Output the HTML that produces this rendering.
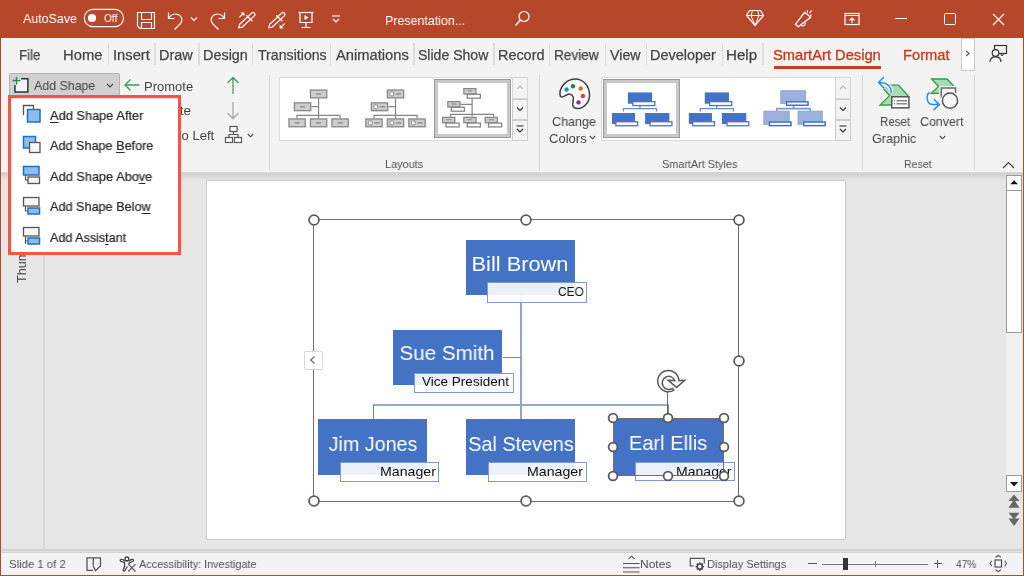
<!DOCTYPE html>
<html><head><meta charset="utf-8"><style>
html,body{margin:0;padding:0;width:1024px;height:576px;overflow:hidden;background:#f3f3f3;}
body{position:relative;font-family:"Liberation Sans", sans-serif;}
.t{position:absolute;white-space:pre;font-family:"Liberation Sans", sans-serif;will-change:transform;}
u{text-decoration:underline;text-underline-offset:1.5px;text-decoration-thickness:1px;}
svg{overflow:visible;}
</style></head><body>
<div style="position:absolute;left:0px;top:0px;width:1024px;height:38px;background:#B7472A"></div>
<div style="position:absolute;left:0px;top:175px;width:1024px;height:374px;background:#E6E6E6"></div>
<div style="position:absolute;left:0px;top:38px;width:1024px;height:133.7px;background:#F3F3F3"></div>
<div style="position:absolute;left:0px;top:171.7px;width:1024px;height:8px;background:linear-gradient(#dadada 0%,#d0d0d0 22%,#e6e6e6 100%)"></div>
<div style="position:absolute;left:0px;top:549px;width:1024px;height:1.5px;background:#d2d2d2"></div>
<div style="position:absolute;left:0px;top:550.5px;width:1024px;height:1px;background:#e0e0e0"></div>
<div style="position:absolute;left:0px;top:551.6px;width:1024px;height:1.2px;background:#d2d2d2"></div>
<div style="position:absolute;left:0px;top:552.8px;width:1024px;height:23px;background:#F3F3F3"></div>
<div style="position:absolute;left:0px;top:0px;width:1px;height:576px;background:#B7472A"></div>
<div style="position:absolute;left:1023px;top:0px;width:1px;height:576px;background:#B7472A"></div>
<div style="position:absolute;left:0px;top:575px;width:1024px;height:1px;background:#B7472A"></div>
<div class="t" style="left:23.40px;top:11.90px;font-size:13px;line-height:13px;color:#ffffff;transform:scaleX(0.9536);transform-origin:0 0;">AutoSave</div>
<svg style="position:absolute;left:82px;top:7px;" width="44" height="22" viewBox="0 0 44 22"><rect x="2.3" y="2.4" width="39.2" height="17.2" rx="8.6" fill="none" stroke="#fff" stroke-width="1.1"/><circle cx="10" cy="11" r="4.1" fill="#fff"/></svg>
<div class="t" style="left:103.75px;top:13.19px;font-size:11px;line-height:11px;color:#ffffff;transform:scaleX(0.9167);transform-origin:0 0;">Off</div>
<svg style="position:absolute;left:136px;top:11px;" width="20" height="19" viewBox="0 0 20 19"><path d="M1.5 1.5H18.5V17.5H4L1.5 15Z" fill="none" stroke="#fff" stroke-width="1.15"/><path d="M5.5 1.5V8.5H15.5V1.5" fill="none" stroke="#fff" stroke-width="1.15"/><path d="M5.5 17.5V11.5H15.5V17.5" fill="none" stroke="#fff" stroke-width="1.15"/></svg>
<svg style="position:absolute;left:166px;top:11px;" width="20" height="19" viewBox="0 0 20 19"><path d="M2.5 1.5V7.5H8.5" fill="none" stroke="#fff" stroke-width="1.2"/><path d="M2.8 7.3C5 3.5 9 2.5 12 3.5C16 5 17 9.5 14.5 12.5L8.5 18.5" fill="none" stroke="#fff" stroke-width="1.2"/></svg>
<svg style="position:absolute;left:190px;top:16px;" width="8" height="6" viewBox="0 0 8 6"><path d="M1 1.5L4 4.5L7 1.5" fill="none" stroke="#fff" stroke-width="1.1"/></svg>
<svg style="position:absolute;left:207px;top:11px;" width="20" height="19" viewBox="0 0 20 19"><path d="M17.5 1.5V7.5H11.5" fill="none" stroke="#fff" stroke-width="1.2"/><path d="M17.2 7.3C15 3.5 11 2.5 8 3.5C4 5 3 9.5 5.5 12.5L11.5 18.5" fill="none" stroke="#fff" stroke-width="1.2"/></svg>
<svg style="position:absolute;left:237px;top:11px;" width="20" height="20" viewBox="0 0 20 20"><path d="M1.7 16.9L2.7 13.2L14.7 2.1A1.9 1.9 0 0 1 17.3 4.9L5.3 16Z" fill="none" stroke="#fff" stroke-width="1.2" stroke-linejoin="round"/><path d="M9.3 4.3L15.4 10.2" stroke="#fff" stroke-width="1.2"/><path d="M2.4 6.3L6.5 2.2" stroke="#fff" stroke-width="1.2"/><path d="M3.5 1.4H7.4V5.3Z" fill="#fff"/></svg>
<svg style="position:absolute;left:267px;top:11px;" width="20" height="20" viewBox="0 0 20 20"><path d="M1.7 16.9L2.7 13.2L14.7 2.1A1.9 1.9 0 0 1 17.3 4.9L5.3 16Z" fill="none" stroke="#fff" stroke-width="1.2" stroke-linejoin="round"/><path d="M9.3 4.3L15.4 10.2" stroke="#fff" stroke-width="1.2"/><path d="M17.6 12.6L13.5 16.7" stroke="#fff" stroke-width="1.2"/><path d="M12.6 13.6V17.5H16.5Z" fill="#fff"/></svg>
<svg style="position:absolute;left:297px;top:11px;" width="18" height="18" viewBox="0 0 18 18"><path d="M1.5 1.5H16.5" stroke="#fff" stroke-width="1.2"/><path d="M3 1.5V11.5H15V1.5" fill="none" stroke="#fff" stroke-width="1.2"/><path d="M7.5 4L11.5 6.5L7.5 9Z" fill="#fff"/><path d="M9 11.5V16.5M4.5 16.5H13.5" stroke="#fff" stroke-width="1.2"/></svg>
<svg style="position:absolute;left:331px;top:15px;" width="10" height="9" viewBox="0 0 10 9"><path d="M1 1H9" stroke="#fff" stroke-width="1.1"/><path d="M2 4L5 7L8 4" fill="none" stroke="#fff" stroke-width="1.1"/></svg>
<div class="t" style="left:384.58px;top:13.57px;font-size:13.5px;line-height:13.5px;color:#ffffff;transform:scaleX(0.9206);transform-origin:0 0;">Presentation...</div>
<svg style="position:absolute;left:514px;top:10px;" width="17" height="17" viewBox="0 0 17 17"><circle cx="10" cy="6.5" r="5" fill="none" stroke="#fff" stroke-width="1.2"/><path d="M6.5 10L1.5 15.5" stroke="#fff" stroke-width="1.3"/></svg>
<svg style="position:absolute;left:745px;top:9px;" width="20" height="18" viewBox="0 0 20 18"><path d="M4.5 1.5H15.5L18.5 6.5L10 16.5L1.5 6.5Z" fill="none" stroke="#fff" stroke-width="1.2"/><path d="M1.5 6.5H18.5M7.5 1.5L6 6.5L10 16.5L14 6.5L12.5 1.5" fill="none" stroke="#fff" stroke-width="1"/></svg>
<svg style="position:absolute;left:794px;top:9px;" width="20" height="19" viewBox="0 0 20 19"><path d="M1.3 15.3L10.7 3.25L16.75 8.25L4.25 17.8Z" fill="none" stroke="#fff" stroke-width="1.25" stroke-linejoin="round"/><path d="M7 15.6C7.5 17.8 11 17.6 11.6 13.5" fill="none" stroke="#fff" stroke-width="1.2"/><path d="M13.2 1.2L13.6 3.6M17.8 1.4L15.5 3.8M17.6 6.1L16 6.1" stroke="#fff" stroke-width="1.1"/></svg>
<svg style="position:absolute;left:844px;top:12px;" width="16" height="14" viewBox="0 0 16 14"><rect x="1" y="1.5" width="14" height="11" fill="none" stroke="#fff" stroke-width="1.2"/><path d="M1 3.5H15" stroke="#fff" stroke-width="1"/><path d="M8 11V6M5.5 8.5L8 6L10.5 8.5" fill="none" stroke="#fff" stroke-width="1.1"/></svg>
<div style="position:absolute;left:895px;top:18px;width:12px;height:1px;background:#fff"></div>
<div style="position:absolute;left:944px;top:13px;width:12px;height:12px;border:1px solid #fff;box-sizing:border-box;border-radius:1.5px"></div>
<svg style="position:absolute;left:992px;top:13px;" width="13" height="13" viewBox="0 0 13 13"><path d="M1 1L12 12M12 1L1 12" stroke="#fff" stroke-width="1.2"/></svg>
<div class="t" style="left:18.55px;top:48.40px;font-size:14px;line-height:14px;color:#444444;-webkit-text-stroke:0.25px #444444;transform:scaleX(0.9524);transform-origin:0 0;">File</div>
<div class="t" style="left:63.44px;top:48.40px;font-size:14px;line-height:14px;color:#444444;-webkit-text-stroke:0.25px #444444;transform:scaleX(1.0556);transform-origin:0 0;">Home</div>
<div class="t" style="left:112.70px;top:48.40px;font-size:14px;line-height:14px;color:#444444;-webkit-text-stroke:0.25px #444444;transform:scaleX(1.0515);transform-origin:0 0;">Insert</div>
<div class="t" style="left:158.97px;top:48.40px;font-size:14px;line-height:14px;color:#444444;-webkit-text-stroke:0.25px #444444;transform:scaleX(1.0312);transform-origin:0 0;">Draw</div>
<div class="t" style="left:202.72px;top:48.40px;font-size:14px;line-height:14px;color:#444444;-webkit-text-stroke:0.25px #444444;transform:scaleX(1.0298);transform-origin:0 0;">Design</div>
<div class="t" style="left:257.50px;top:48.40px;font-size:14px;line-height:14px;color:#444444;-webkit-text-stroke:0.25px #444444;transform:scaleX(1.011);transform-origin:0 0;">Transitions</div>
<div class="t" style="left:336.25px;top:48.40px;font-size:14px;line-height:14px;color:#444444;-webkit-text-stroke:0.25px #444444;transform:scaleX(1.0507);transform-origin:0 0;">Animations</div>
<div class="t" style="left:417.75px;top:48.40px;font-size:14px;line-height:14px;color:#444444;-webkit-text-stroke:0.25px #444444;transform:scaleX(1.0036);transform-origin:0 0;">Slide Show</div>
<div class="t" style="left:497.72px;top:48.40px;font-size:14px;line-height:14px;color:#444444;-webkit-text-stroke:0.25px #444444;transform:scaleX(1.0291);transform-origin:0 0;">Record</div>
<div class="t" style="left:554.03px;top:48.40px;font-size:14px;line-height:14px;color:#444444;-webkit-text-stroke:0.25px #444444;transform:scaleX(0.9722);transform-origin:0 0;">Review</div>
<div class="t" style="left:610.00px;top:48.40px;font-size:14px;line-height:14px;color:#444444;-webkit-text-stroke:0.25px #444444;transform:scaleX(1.0167);transform-origin:0 0;">View</div>
<div class="t" style="left:650.22px;top:48.40px;font-size:14px;line-height:14px;color:#444444;-webkit-text-stroke:0.25px #444444;transform:scaleX(1.0317);transform-origin:0 0;">Developer</div>
<div class="t" style="left:726.32px;top:48.40px;font-size:14px;line-height:14px;color:#444444;-webkit-text-stroke:0.25px #444444;transform:scaleX(1.0778);transform-origin:0 0;">Help</div>
<div style="position:absolute;left:107.75px;top:43px;width:1.5px;height:21.5px;background:#dcdcdc"></div>
<div style="position:absolute;left:154.25px;top:43px;width:1.5px;height:21.5px;background:#dcdcdc"></div>
<div style="position:absolute;left:198.0px;top:43px;width:1.5px;height:21.5px;background:#dcdcdc"></div>
<div style="position:absolute;left:251.75px;top:43px;width:1.5px;height:21.5px;background:#dcdcdc"></div>
<div style="position:absolute;left:329.75px;top:43px;width:1.5px;height:21.5px;background:#dcdcdc"></div>
<div style="position:absolute;left:413.0px;top:43px;width:1.5px;height:21.5px;background:#dcdcdc"></div>
<div style="position:absolute;left:493.0px;top:43px;width:1.5px;height:21.5px;background:#dcdcdc"></div>
<div style="position:absolute;left:548.5px;top:43px;width:1.5px;height:21.5px;background:#dcdcdc"></div>
<div style="position:absolute;left:604.75px;top:43px;width:1.5px;height:21.5px;background:#dcdcdc"></div>
<div style="position:absolute;left:645.5px;top:43px;width:1.5px;height:21.5px;background:#dcdcdc"></div>
<div style="position:absolute;left:721.75px;top:43px;width:1.5px;height:21.5px;background:#dcdcdc"></div>
<div style="position:absolute;left:762.25px;top:43px;width:1.5px;height:21.5px;background:#dcdcdc"></div>
<div class="t" style="left:773.25px;top:48.40px;font-size:14px;line-height:14px;color:#C43E1C;-webkit-text-stroke:0.35px #C43E1C;transform:scaleX(1.0495);transform-origin:0 0;">SmartArt Design</div>
<div style="position:absolute;left:774px;top:66px;width:107px;height:3px;background:#C43E1C"></div>
<div class="t" style="left:902.95px;top:48.40px;font-size:14px;line-height:14px;color:#C43E1C;-webkit-text-stroke:0.3px #C43E1C;transform:scaleX(1.0512);transform-origin:0 0;">Format</div>
<div style="position:absolute;left:961px;top:38px;width:14px;height:33px;background:#fff;border:1px solid #c9c9c9;box-sizing:border-box"></div>
<svg style="position:absolute;left:965px;top:50px;" width="6" height="7" viewBox="0 0 6 7"><path d="M1.2 1L4.2 3.5L1.2 6" fill="none" stroke="#555" stroke-width="1.1"/></svg>
<svg style="position:absolute;left:988px;top:44px;" width="20" height="20" viewBox="0 0 20 20"><rect x="6.5" y="1.5" width="12" height="8" fill="none" stroke="#333" stroke-width="1.2"/><circle cx="7.5" cy="9" r="3.3" fill="#f3f3f3" stroke="#333" stroke-width="1.2"/><path d="M2 18C2 14.5 4.5 12.8 7.5 12.8C10.5 12.8 13 14.5 13 18" fill="none" stroke="#333" stroke-width="1.2"/><path d="M12.5 9.5L14 12L16 9.5" fill="none" stroke="#333" stroke-width="1"/></svg>
<!--RIBBON-->
<div style="position:absolute;left:9px;top:73px;width:111px;height:23px;background:#d0d0d0;border:1px solid #b3b3b3;box-sizing:border-box;border-radius:2px"></div>
<svg style="position:absolute;left:12px;top:76px;" width="18" height="18" viewBox="0 0 18 18"><rect x="3" y="3" width="12.8" height="13" fill="#f0f4f9"/><path d="M9 2.75H15.85V15.95H2.95V9" fill="none" stroke="#333" stroke-width="1.5"/><path d="M4.5 1V8.6M0.7 4.6H8.5" stroke="#1f8b3b" stroke-width="1.5"/></svg>
<div class="t" style="left:34.00px;top:79.25px;font-size:13px;line-height:13px;color:#444444;transform:scaleX(0.9531);transform-origin:0 0;">Add Shape</div>
<svg style="position:absolute;left:106px;top:83px;" width="8" height="5" viewBox="0 0 8 5"><path d="M1 1L4 4L7 1" fill="none" stroke="#444" stroke-width="1.1"/></svg>
<svg style="position:absolute;left:123px;top:78px;" width="18" height="14" viewBox="0 0 18 14"><path d="M16.5 7H2M7.5 1.5L2 7L7.5 12.5" fill="none" stroke="#3aa05a" stroke-width="1.3"/></svg>
<div class="t" style="left:143.71px;top:79.60px;font-size:13px;line-height:13px;color:#444444;transform:scaleX(0.9938);transform-origin:0 0;">Promote</div>
<div class="t" style="left:143.67px;top:104.00px;font-size:13px;line-height:13px;color:#444444;transform:scaleX(1.0341);transform-origin:0 0;">Demote</div>
<div class="t" style="left:143.70px;top:128.60px;font-size:13px;line-height:13px;color:#444444;transform:scaleX(1.0007);transform-origin:0 0;">Right to Left</div>
<svg style="position:absolute;left:226px;top:76px;" width="14" height="19" viewBox="0 0 14 19"><path d="M7 18V1.5M1.5 7L7 1.5L12.5 7" fill="none" stroke="#3aa05a" stroke-width="1.3"/></svg>
<svg style="position:absolute;left:226px;top:101px;" width="14" height="19" viewBox="0 0 14 19"><path d="M7 1V17.5M1.5 12L7 17.5L12.5 12" fill="none" stroke="#a8a8a8" stroke-width="1.3"/></svg>
<svg style="position:absolute;left:224px;top:125px;" width="19" height="19" viewBox="0 0 19 19"><rect x="6" y="1.5" width="7" height="5" fill="#fff" stroke="#555" stroke-width="1.2"/><path d="M9.5 6.5V9.5M5 12.5V9.5H14V12.5" fill="none" stroke="#555" stroke-width="1.2"/><rect x="1.5" y="12.5" width="7" height="5" fill="#fff" stroke="#555" stroke-width="1.2"/><rect x="10.5" y="12.5" width="7" height="5" fill="#fff" stroke="#555" stroke-width="1.2"/></svg>
<svg style="position:absolute;left:247px;top:133px;" width="7" height="5" viewBox="0 0 7 5"><path d="M0.8 1L3.5 3.8L6.2 1" fill="none" stroke="#444" stroke-width="1.1"/></svg>
<div style="position:absolute;left:269px;top:75px;width:1px;height:95px;background:#d4d4d4"></div>
<div style="position:absolute;left:279px;top:77px;width:234px;height:64px;background:#fff;border:1px solid #dadada;box-sizing:border-box"></div>
<div style="position:absolute;left:434px;top:79px;width:77px;height:59px;background:#fff;border:1px solid #9a9a9a;box-sizing:border-box"></div>
<div style="position:absolute;left:435px;top:80px;width:75px;height:57px;border:3.5px solid #c8c8c8;box-sizing:border-box"></div>
<svg style="position:absolute;left:279px;top:77px;" width="234" height="64" viewBox="0 0 234 64"><path d="M39.60 21.40V41.50M32.50 29.60H39.60M18.00 41.50V38.40H61.10V41.50" fill="none" stroke="#858585" stroke-width="1.2"/><rect x="31.43" y="13.03" width="16.35" height="7.85" fill="#cdcdcd" stroke="#858585" stroke-width="1.25"/><path d="M37.10 16.95H42.10" fill="none" stroke="#858585" stroke-width="1.3"/><rect x="15.43" y="25.83" width="16.35" height="7.85" fill="#cdcdcd" stroke="#858585" stroke-width="1.25"/><path d="M21.10 29.75H26.10" fill="none" stroke="#858585" stroke-width="1.3"/><rect x="9.93" y="41.92" width="16.35" height="7.85" fill="#cdcdcd" stroke="#858585" stroke-width="1.25"/><path d="M15.60 45.85H20.60" fill="none" stroke="#858585" stroke-width="1.3"/><rect x="31.43" y="41.92" width="16.35" height="7.85" fill="#cdcdcd" stroke="#858585" stroke-width="1.25"/><path d="M37.10 45.85H42.10" fill="none" stroke="#858585" stroke-width="1.3"/><rect x="52.93" y="41.92" width="16.35" height="7.85" fill="#cdcdcd" stroke="#858585" stroke-width="1.25"/><path d="M58.60 45.85H63.60" fill="none" stroke="#858585" stroke-width="1.3"/><path d="M116.50 21.40V41.50M109.40 29.60H116.50M94.90 41.50V38.40H138.00V41.50" fill="none" stroke="#858585" stroke-width="1.2"/><rect x="108.33" y="13.03" width="16.35" height="7.85" fill="#cdcdcd" stroke="#858585" stroke-width="1.25"/><rect x="110.80" y="15.00" width="3.9" height="3.9" rx="1" fill="#fff" stroke="#858585" stroke-width="1"/><path d="M116.90 16.95H122.20" fill="none" stroke="#858585" stroke-width="1.3"/><rect x="92.33" y="25.83" width="16.35" height="7.85" fill="#cdcdcd" stroke="#858585" stroke-width="1.25"/><rect x="94.80" y="27.80" width="3.9" height="3.9" rx="1" fill="#fff" stroke="#858585" stroke-width="1"/><path d="M100.90 29.75H106.20" fill="none" stroke="#858585" stroke-width="1.3"/><rect x="86.83" y="41.92" width="16.35" height="7.85" fill="#cdcdcd" stroke="#858585" stroke-width="1.25"/><rect x="89.30" y="43.90" width="3.9" height="3.9" rx="1" fill="#fff" stroke="#858585" stroke-width="1"/><path d="M95.40 45.85H100.70" fill="none" stroke="#858585" stroke-width="1.3"/><rect x="108.33" y="41.92" width="16.35" height="7.85" fill="#cdcdcd" stroke="#858585" stroke-width="1.25"/><rect x="110.80" y="43.90" width="3.9" height="3.9" rx="1" fill="#fff" stroke="#858585" stroke-width="1"/><path d="M116.90 45.85H122.20" fill="none" stroke="#858585" stroke-width="1.3"/><rect x="129.83" y="41.92" width="16.35" height="7.85" fill="#cdcdcd" stroke="#858585" stroke-width="1.25"/><rect x="132.30" y="43.90" width="3.9" height="3.9" rx="1" fill="#fff" stroke="#858585" stroke-width="1"/><path d="M138.40 45.85H143.70" fill="none" stroke="#858585" stroke-width="1.3"/><path d="M193.10 21.00V39.70M181.60 27.40H193.10M171.60 39.70V37.30H214.60V39.70" fill="none" stroke="#858585" stroke-width="1.2"/><rect x="184.82" y="11.62" width="12.15" height="5.35" fill="#cdcdcd" stroke="#858585" stroke-width="1.25"/><path d="M188.40 14.00H193.40" fill="none" stroke="#858585" stroke-width="1"/><rect x="188.22" y="17.33" width="13.15" height="3.85" fill="#fff" stroke="#858585" stroke-width="1.25"/><rect x="168.82" y="24.62" width="12.15" height="5.35" fill="#cdcdcd" stroke="#858585" stroke-width="1.25"/><path d="M172.40 27.00H177.40" fill="none" stroke="#858585" stroke-width="1"/><rect x="172.22" y="30.33" width="13.15" height="3.85" fill="#fff" stroke="#858585" stroke-width="1.25"/><rect x="163.62" y="40.38" width="12.15" height="5.35" fill="#cdcdcd" stroke="#858585" stroke-width="1.25"/><path d="M167.20 42.75H172.20" fill="none" stroke="#858585" stroke-width="1"/><rect x="167.02" y="46.08" width="13.15" height="3.85" fill="#fff" stroke="#858585" stroke-width="1.25"/><rect x="184.82" y="40.38" width="12.15" height="5.35" fill="#cdcdcd" stroke="#858585" stroke-width="1.25"/><path d="M188.40 42.75H193.40" fill="none" stroke="#858585" stroke-width="1"/><rect x="188.22" y="46.08" width="13.15" height="3.85" fill="#fff" stroke="#858585" stroke-width="1.25"/><rect x="206.12" y="40.38" width="12.15" height="5.35" fill="#cdcdcd" stroke="#858585" stroke-width="1.25"/><path d="M209.70 42.75H214.70" fill="none" stroke="#858585" stroke-width="1"/><rect x="209.52" y="46.08" width="13.15" height="3.85" fill="#fff" stroke="#858585" stroke-width="1.25"/></svg>
<div style="position:absolute;left:512px;top:77px;width:16px;height:22px;background:#f3f3f3;border:1px solid #d6d6d6;box-sizing:border-box"></div>
<div style="position:absolute;left:512px;top:98.5px;width:16px;height:21px;background:#f3f3f3;border:1px solid #cdcdcd;box-sizing:border-box"></div>
<div style="position:absolute;left:512px;top:119.5px;width:16px;height:21.5px;background:#f3f3f3;border:1px solid #cdcdcd;box-sizing:border-box"></div>
<svg style="position:absolute;left:516px;top:85px;" width="8" height="5" viewBox="0 0 8 5"><path d="M1 4L4 1L7 4" fill="none" stroke="#b5b5b5" stroke-width="1.1"/></svg>
<svg style="position:absolute;left:516px;top:106px;" width="8" height="6" viewBox="0 0 8 6"><path d="M1 1.5L4 4.5L7 1.5" fill="none" stroke="#333" stroke-width="1.2"/></svg>
<svg style="position:absolute;left:516px;top:125px;" width="8" height="9" viewBox="0 0 8 9"><path d="M0.5 1H7.5" stroke="#333" stroke-width="1.1"/><path d="M1 4L4 7L7 4" fill="none" stroke="#333" stroke-width="1.2"/></svg>
<div class="t" style="left:385.05px;top:158.67px;font-size:11.5px;line-height:11.5px;color:#505050;transform:scaleX(0.9487);transform-origin:0 0;">Layouts</div>
<div style="position:absolute;left:539px;top:75px;width:1px;height:95px;background:#d4d4d4"></div>
<svg style="position:absolute;left:557px;top:77px;" width="34" height="34" viewBox="0 0 34 34"><path d="M3.5 19.5C1 13 8 2 18 2C26 2 32.5 8.5 32.5 18C32.5 26 26.5 31.5 20.5 31.5C16.5 31.5 15 29 16 25C17 21.5 16.5 17.5 12.5 17C9 16.8 6 22 3.5 19.5Z" fill="#fff" stroke="#404040" stroke-width="1.5"/><circle cx="9.6" cy="12.5" r="2.2" fill="#1e88d8"/><circle cx="16" cy="9.3" r="2.2" fill="#1d8a3c"/><circle cx="23.7" cy="11.5" r="2.2" fill="#e8700a"/><circle cx="25.9" cy="19" r="2.2" fill="#e83a3a"/><circle cx="21.5" cy="25.4" r="2.2" fill="#8a2bae"/></svg>
<div class="t" style="left:551.93px;top:115.40px;font-size:13px;line-height:13px;color:#444444;transform:scaleX(0.9659);transform-origin:0 0;">Change</div>
<div class="t" style="left:549.30px;top:132.00px;font-size:13px;line-height:13px;color:#444444;transform:scaleX(1.0028);transform-origin:0 0;">Colors</div>
<svg style="position:absolute;left:589px;top:135px;" width="7" height="5" viewBox="0 0 7 5"><path d="M0.8 1L3.5 3.8L6.2 1" fill="none" stroke="#444" stroke-width="1.1"/></svg>
<div style="position:absolute;left:601px;top:77px;width:235px;height:64px;background:#fff;border:1px solid #dadada;box-sizing:border-box"></div>
<div style="position:absolute;left:603px;top:79px;width:77px;height:59px;background:#fff;border:1px solid #9a9a9a;box-sizing:border-box"></div>
<div style="position:absolute;left:604px;top:80px;width:75px;height:57px;border:3.5px solid #c8c8c8;box-sizing:border-box"></div>
<svg style="position:absolute;left:601px;top:77px;" width="235" height="64" viewBox="0 0 235 64"><path d="M39.00 29.00V31.70M22.40 34.40V31.70H55.50V34.40" fill="none" stroke="#6b8cc8" stroke-width="1.3"/><rect x="26.90" y="15.40" width="24.20" height="11.30" fill="#4472c4"/><rect x="31.85" y="24.65" width="22.00" height="3.90" fill="#fff" stroke="#4a75c4" stroke-width="1.3"/><rect x="11.00" y="36.00" width="23.10" height="11.10" fill="#4472c4"/><rect x="14.85" y="44.75" width="21.80" height="4.00" fill="#fff" stroke="#4a75c4" stroke-width="1.3"/><rect x="44.10" y="36.00" width="24.30" height="11.10" fill="#4472c4"/><rect x="49.15" y="44.75" width="21.80" height="4.00" fill="#fff" stroke="#4a75c4" stroke-width="1.3"/><path d="M115.85 29.00V31.70M99.25 34.40V31.70H132.35V34.40" fill="none" stroke="#6b8cc8" stroke-width="1.3"/><rect x="103.75" y="15.40" width="24.20" height="11.30" fill="#4472c4"/><rect x="108.70" y="24.65" width="22.00" height="3.90" fill="#fff" stroke="#4a75c4" stroke-width="1.3"/><rect x="87.85" y="36.00" width="23.10" height="11.10" fill="#4472c4"/><rect x="91.70" y="44.75" width="21.80" height="4.00" fill="#fff" stroke="#4a75c4" stroke-width="1.3"/><rect x="120.95" y="36.00" width="24.30" height="11.10" fill="#4472c4"/><rect x="126.00" y="44.75" width="21.80" height="4.00" fill="#fff" stroke="#4a75c4" stroke-width="1.3"/><path d="M192.50 28.80V31.60M175.80 34.00V31.60H209.10V34.00" fill="none" stroke="#7d98cc" stroke-width="1.6"/><rect x="179.80" y="13.75" width="24.60" height="12.55" fill="#9cb0dc" stroke="#8ea3d2" stroke-width="1"/><rect x="185.65" y="24.85" width="21.40" height="3.40" fill="#fff" stroke="#4472c4" stroke-width="1.5"/><rect x="162.90" y="34.20" width="25.30" height="13.10" fill="#9cb0dc" stroke="#8ea3d2" stroke-width="1"/><rect x="168.45" y="45.05" width="21.55" height="3.60" fill="#fff" stroke="#4472c4" stroke-width="1.5"/><rect x="197.10" y="34.20" width="24.20" height="13.10" fill="#9cb0dc" stroke="#8ea3d2" stroke-width="1"/><rect x="202.75" y="45.05" width="21.40" height="3.60" fill="#fff" stroke="#4472c4" stroke-width="1.5"/></svg>
<div style="position:absolute;left:835px;top:77px;width:16px;height:22px;background:#f3f3f3;border:1px solid #d6d6d6;box-sizing:border-box"></div>
<div style="position:absolute;left:835px;top:98.5px;width:16px;height:21px;background:#f3f3f3;border:1px solid #cdcdcd;box-sizing:border-box"></div>
<div style="position:absolute;left:835px;top:119.5px;width:16px;height:21.5px;background:#f3f3f3;border:1px solid #cdcdcd;box-sizing:border-box"></div>
<svg style="position:absolute;left:839px;top:85px;" width="8" height="5" viewBox="0 0 8 5"><path d="M1 4L4 1L7 4" fill="none" stroke="#b5b5b5" stroke-width="1.1"/></svg>
<svg style="position:absolute;left:839px;top:106px;" width="8" height="6" viewBox="0 0 8 6"><path d="M1 1.5L4 4.5L7 1.5" fill="none" stroke="#333" stroke-width="1.2"/></svg>
<svg style="position:absolute;left:839px;top:125px;" width="8" height="9" viewBox="0 0 8 9"><path d="M0.5 1H7.5" stroke="#333" stroke-width="1.1"/><path d="M1 4L4 7L7 4" fill="none" stroke="#333" stroke-width="1.2"/></svg>
<div class="t" style="left:662.36px;top:158.67px;font-size:11.5px;line-height:11.5px;color:#505050;transform:scaleX(0.9424);transform-origin:0 0;">SmartArt Styles</div>
<div style="position:absolute;left:862px;top:75px;width:1px;height:95px;background:#d4d4d4"></div>
<svg style="position:absolute;left:876px;top:76px;" width="36" height="34" viewBox="0 0 36 34"><path d="M4 9.2H22.5L32 19.6L22.5 29H4L13.5 19.6Z" fill="#a6dcb1" stroke="#2e9e4a" stroke-width="1.3" stroke-linejoin="miter"/><path d="M15.3 17C15.3 10 11.5 6.5 2.5 6.5M8 1L2.5 6.5L8 12" fill="none" stroke="#f3f3f3" stroke-width="4"/><path d="M15.3 17C15.3 10 11.5 6.5 2.5 6.5M8 1L2.5 6.5L8 12" fill="none" stroke="#2b8ee0" stroke-width="1.5"/><rect x="15.75" y="20.75" width="17.2" height="11.1" fill="#fff" stroke="#555" stroke-width="1.5"/><path d="M18 24.8H19.2M20.5 24.8H31M18 27.8H19.2M20.5 27.8H31" stroke="#888" stroke-width="1.4"/></svg>
<div class="t" style="left:879.71px;top:114.90px;font-size:13px;line-height:13px;color:#444444;transform:scaleX(0.8879);transform-origin:0 0;">Reset</div>
<div class="t" style="left:872.28px;top:132.00px;font-size:13px;line-height:13px;color:#444444;transform:scaleX(0.9693);transform-origin:0 0;">Graphic</div>
<svg style="position:absolute;left:924px;top:77px;" width="36" height="35" viewBox="0 0 36 35"><path d="M7.5 2H23.1L30 9.5L23.1 16.4H7.1L14.6 9.5Z" fill="#a6dcb1" stroke="#2e9e4a" stroke-width="1.3"/><path d="M16.5 21V10.5H31.5V16" fill="#f6f6f6" stroke="#f3f3f3" stroke-width="3"/><path d="M17.2 21V11H31.5V16" fill="#f6f6f6" stroke="#6a6a6a" stroke-width="1.5"/><circle cx="26" cy="23.7" r="7.6" fill="#f6f6f6" stroke="#f3f3f3" stroke-width="3.5"/><circle cx="26" cy="23.7" r="7.6" fill="#f6f6f6" stroke="#555" stroke-width="1.5"/><path d="M5.4 15.4C1.5 18.5 2.5 27.6 9 27.6H15.4M9.9 22.3L15.4 27.6L9.5 33.1" fill="none" stroke="#2b8ee0" stroke-width="1.5"/></svg>
<div class="t" style="left:919.94px;top:114.90px;font-size:13px;line-height:13px;color:#444444;transform:scaleX(0.9556);transform-origin:0 0;">Convert</div>
<svg style="position:absolute;left:939px;top:135px;" width="7" height="5" viewBox="0 0 7 5"><path d="M0.8 1L3.5 3.8L6.2 1" fill="none" stroke="#444" stroke-width="1.1"/></svg>
<div class="t" style="left:904.08px;top:158.67px;font-size:11.5px;line-height:11.5px;color:#505050;transform:scaleX(0.9172);transform-origin:0 0;">Reset</div>
<div style="position:absolute;left:974px;top:75px;width:1px;height:95px;background:#d4d4d4"></div>
<svg style="position:absolute;left:1002px;top:161px;" width="13" height="8" viewBox="0 0 13 8"><path d="M1 7L6.5 1.5L12 7" fill="none" stroke="#444" stroke-width="1.2"/></svg>
<div style="position:absolute;left:43px;top:175px;width:2px;height:374.5px;background:#d6d6d6"></div>
<div class="t" style="left:14.6px;top:283px;font-size:12.6px;line-height:14px;color:#444;transform:rotate(-90deg);transform-origin:0 0;">Thumbnails</div>
<div style="position:absolute;left:206px;top:180px;width:640px;height:360px;background:#fff;border:1px solid #cbcbcb;box-sizing:border-box;border-radius:1px"></div>
<div style="position:absolute;left:1006px;top:190px;width:16px;height:285px;background:#f0f0f0"></div>
<div style="position:absolute;left:1006px;top:175px;width:16px;height:16px;background:#fff;border:1px solid #999;box-sizing:border-box"></div>
<svg style="position:absolute;left:1009px;top:179px;" width="10" height="6" viewBox="0 0 10 6"><path d="M1.2 5.2L5.1 1.2L9 5.2Z" fill="#111"/></svg>
<div style="position:absolute;left:1006px;top:190px;width:16px;height:143px;background:#fff;border:1px solid #999;box-sizing:border-box"></div>
<div style="position:absolute;left:1006px;top:475px;width:16px;height:17px;background:#fff;border:1px solid #999;box-sizing:border-box"></div>
<svg style="position:absolute;left:1009px;top:481px;" width="10" height="6" viewBox="0 0 10 6"><path d="M1 1L5.1 5.5L9.2 1Z" fill="#111"/></svg>
<svg style="position:absolute;left:1008px;top:494px;" width="12" height="33" viewBox="0 0 12 33"><path d="M6 0.6L11.5 7H0.5Z M6 5.5L11.5 13.8H0.5Z" fill="#666"/><path d="M0.5 18.7H11.5L6 25.5Z M0.5 24.5H11.5L6 31.9Z" fill="#666"/></svg>
<div style="position:absolute;left:520px;top:295px;width:1.6px;height:124px;background:#8fa6d2"></div>
<div style="position:absolute;left:502.5px;top:356.5px;width:18.5px;height:1.6px;background:#6a89c3"></div>
<div style="position:absolute;left:373px;top:404.2px;width:296px;height:1.7px;background:#93aad4"></div>
<div style="position:absolute;left:372.7px;top:404.5px;width:1.4px;height:14px;background:#6282be"></div>
<div style="position:absolute;left:667.2px;top:404.5px;width:1.4px;height:13.5px;background:#6282be"></div>
<div style="position:absolute;left:465.8px;top:239.8px;width:109.3px;height:55.2px;background:#4472c4"></div>
<div class="t" style="left:220.45px;width:600px;text-align:center;top:252.72px;font-size:21px;line-height:21px;color:#fff;transform:scaleX(1.039);transform-origin:50% 0;">Bill Brown</div>
<div style="position:absolute;left:487.2px;top:282.3px;width:99.8px;height:20.5px;background:rgba(255,255,255,0.9);border:1px solid #7c9bd6;box-sizing:border-box"></div>
<div class="t" style="left:557.52px;top:285.17px;font-size:13.5px;line-height:13.5px;color:#111;transform:scaleX(0.8786);transform-origin:0 0;">CEO</div>
<div style="position:absolute;left:393.1px;top:329.6px;width:108.6px;height:55.8px;background:#4472c4"></div>
<div class="t" style="left:147.40px;width:600px;text-align:center;top:342.22px;font-size:21px;line-height:21px;color:#fff;transform:scaleX(0.981);transform-origin:50% 0;">Sue Smith</div>
<div style="position:absolute;left:414.2px;top:373.4px;width:99.5px;height:19.2px;background:rgba(255,255,255,0.9);border:1px solid #7c9bd6;box-sizing:border-box"></div>
<div class="t" style="left:421.60px;top:375.07px;font-size:13.5px;line-height:13.5px;color:#111;transform:scaleX(1.0023);transform-origin:0 0;">Vice President</div>
<div style="position:absolute;left:318.2px;top:419.1px;width:109.3px;height:55.8px;background:#4472c4"></div>
<div class="t" style="left:72.85px;width:600px;text-align:center;top:432.92px;font-size:21px;line-height:21px;color:#fff;transform:scaleX(0.939);transform-origin:50% 0;">Jim Jones</div>
<div style="position:absolute;left:340px;top:462.4px;width:99.25px;height:19.2px;background:rgba(255,255,255,0.9);border:1px solid #7c9bd6;box-sizing:border-box"></div>
<div class="t" style="left:379.65px;top:465.17px;font-size:13.5px;line-height:13.5px;color:#111;transform:scaleX(1.05);transform-origin:0 0;">Manager</div>
<div style="position:absolute;left:466.2px;top:419.1px;width:108.8px;height:55.8px;background:#4472c4"></div>
<div class="t" style="left:220.60px;width:600px;text-align:center;top:432.92px;font-size:21px;line-height:21px;color:#fff;transform:scaleX(0.943);transform-origin:50% 0;">Sal Stevens</div>
<div style="position:absolute;left:487.6px;top:462.4px;width:99.2px;height:19.2px;background:rgba(255,255,255,0.9);border:1px solid #7c9bd6;box-sizing:border-box"></div>
<div class="t" style="left:527.25px;top:465.17px;font-size:13.5px;line-height:13.5px;color:#111;transform:scaleX(1.05);transform-origin:0 0;">Manager</div>
<div style="position:absolute;left:613.1px;top:418.1px;width:110.5px;height:57px;background:#4472c4"></div>
<div class="t" style="left:368.35px;width:600px;text-align:center;top:432.42px;font-size:21px;line-height:21px;color:#fff;transform:scaleX(0.96);transform-origin:50% 0;">Earl Ellis</div>
<div style="position:absolute;left:635px;top:462.3px;width:99.5px;height:19.2px;background:rgba(255,255,255,0.9);border:1px solid #7c9bd6;box-sizing:border-box"></div>
<div class="t" style="left:675.56px;top:465.17px;font-size:13.5px;line-height:13.5px;color:#111;transform:scaleX(1.0423);transform-origin:0 0;">Manager</div>
<div style="position:absolute;left:313px;top:219px;width:426px;height:282.5px;border:1px solid #6e6e6e;box-sizing:border-box"></div>
<svg style="position:absolute;left:306px;top:212px;" width="16" height="16" viewBox="0 0 16 16"><circle cx="8" cy="8" r="4.8999999999999995" fill="#fff" stroke="#5a5a5a" stroke-width="1.8"/></svg>
<svg style="position:absolute;left:518px;top:212px;" width="16" height="16" viewBox="0 0 16 16"><circle cx="8" cy="8" r="4.8999999999999995" fill="#fff" stroke="#5a5a5a" stroke-width="1.8"/></svg>
<svg style="position:absolute;left:731px;top:212px;" width="16" height="16" viewBox="0 0 16 16"><circle cx="8" cy="8" r="4.8999999999999995" fill="#fff" stroke="#5a5a5a" stroke-width="1.8"/></svg>
<svg style="position:absolute;left:306px;top:352.5px;" width="16" height="16" viewBox="0 0 16 16"><circle cx="8" cy="8" r="4.8999999999999995" fill="#fff" stroke="#5a5a5a" stroke-width="1.8"/></svg>
<svg style="position:absolute;left:731px;top:352.5px;" width="16" height="16" viewBox="0 0 16 16"><circle cx="8" cy="8" r="4.8999999999999995" fill="#fff" stroke="#5a5a5a" stroke-width="1.8"/></svg>
<svg style="position:absolute;left:306px;top:493px;" width="16" height="16" viewBox="0 0 16 16"><circle cx="8" cy="8" r="4.8999999999999995" fill="#fff" stroke="#5a5a5a" stroke-width="1.8"/></svg>
<svg style="position:absolute;left:518px;top:493px;" width="16" height="16" viewBox="0 0 16 16"><circle cx="8" cy="8" r="4.8999999999999995" fill="#fff" stroke="#5a5a5a" stroke-width="1.8"/></svg>
<svg style="position:absolute;left:731px;top:493px;" width="16" height="16" viewBox="0 0 16 16"><circle cx="8" cy="8" r="4.8999999999999995" fill="#fff" stroke="#5a5a5a" stroke-width="1.8"/></svg>
<div style="position:absolute;left:303.5px;top:350.5px;width:19px;height:19px;background:#fff;border:1px solid #d6d6d6;box-sizing:border-box;border-radius:2px"></div>
<svg style="position:absolute;left:309px;top:355px;" width="7" height="10" viewBox="0 0 7 10"><path d="M5.5 1.5L1.8 5L5.5 8.5" fill="none" stroke="#7a7a7a" stroke-width="1.5"/></svg>
<div style="position:absolute;left:612.6px;top:417.6px;width:111.2px;height:58.2px;border:1px solid #6e6e6e;box-sizing:border-box"></div>
<div style="position:absolute;left:667.2px;top:391.5px;width:1.2px;height:21px;background:#6e6e6e"></div>
<svg style="position:absolute;left:604.7px;top:409.8px;" width="16" height="16" viewBox="0 0 16 16"><circle cx="8" cy="8" r="4.3999999999999995" fill="#fff" stroke="#5a5a5a" stroke-width="1.8"/></svg>
<svg style="position:absolute;left:659.8px;top:409.8px;" width="16" height="16" viewBox="0 0 16 16"><circle cx="8" cy="8" r="4.3999999999999995" fill="#fff" stroke="#5a5a5a" stroke-width="1.8"/></svg>
<svg style="position:absolute;left:715.6px;top:409.8px;" width="16" height="16" viewBox="0 0 16 16"><circle cx="8" cy="8" r="4.3999999999999995" fill="#fff" stroke="#5a5a5a" stroke-width="1.8"/></svg>
<svg style="position:absolute;left:604.7px;top:439px;" width="16" height="16" viewBox="0 0 16 16"><circle cx="8" cy="8" r="4.3999999999999995" fill="#fff" stroke="#5a5a5a" stroke-width="1.8"/></svg>
<svg style="position:absolute;left:715.6px;top:439px;" width="16" height="16" viewBox="0 0 16 16"><circle cx="8" cy="8" r="4.3999999999999995" fill="#fff" stroke="#5a5a5a" stroke-width="1.8"/></svg>
<svg style="position:absolute;left:604.7px;top:468px;" width="16" height="16" viewBox="0 0 16 16"><circle cx="8" cy="8" r="4.3999999999999995" fill="#fff" stroke="#5a5a5a" stroke-width="1.8"/></svg>
<svg style="position:absolute;left:659.8px;top:468px;" width="16" height="16" viewBox="0 0 16 16"><circle cx="8" cy="8" r="4.3999999999999995" fill="#fff" stroke="#5a5a5a" stroke-width="1.8"/></svg>
<svg style="position:absolute;left:715.6px;top:468px;" width="16" height="16" viewBox="0 0 16 16"><circle cx="8" cy="8" r="4.3999999999999995" fill="#fff" stroke="#5a5a5a" stroke-width="1.8"/></svg>
<svg style="position:absolute;left:654px;top:368px;" width="34" height="26" viewBox="0 0 34 26"><path d="M19.9 22.1A10.6 10.6 0 1 1 24.9 12.6L30.7 12.3L22.6 19.4L14.2 12.3L20.8 12.6A6.5 6.5 0 1 0 18.3 20.3Z" fill="#fff" stroke="#5a5a5a" stroke-width="1.5" stroke-linejoin="miter"/></svg>
<div class="t" style="left:8.81px;top:558.67px;font-size:11.5px;line-height:11.5px;color:#505050;transform:scaleX(0.9857);transform-origin:0 0;">Slide 1 of 2</div>
<svg style="position:absolute;left:85px;top:556px;" width="17" height="16" viewBox="0 0 17 16"><path d="M8.5 1.9H2V14.3H8" fill="none" stroke="#555" stroke-width="1.3"/><path d="M8.3 1.9V9.5M8.3 1.9H15.5V9" fill="none" stroke="#555" stroke-width="1.3"/><path d="M8 9.8L10.6 14.6L16 9.3" fill="none" stroke="#555" stroke-width="1.3"/></svg>
<svg style="position:absolute;left:119px;top:555px;" width="18" height="18" viewBox="0 0 18 18"><circle cx="7.9" cy="3.9" r="1.9" fill="none" stroke="#444" stroke-width="1.3"/><path d="M1.2 5.5C1.2 4 3 4.2 5.7 5.6H10.3C13 4.2 14.6 4 14.6 5.5C14.6 6.5 12.5 6.8 10.6 7.3L10 9.3M8.3 11.5L6.3 15C5.8 16.3 4 16 4.3 14.8L5.6 11L5.5 7.3C3.5 6.8 1.2 6.5 1.2 5.5" fill="none" stroke="#444" stroke-width="1.3" stroke-linejoin="round"/><path d="M9.2 9.2L16.5 16.5M16.5 9.2L9.2 16.5" stroke="#555" stroke-width="1.1"/></svg>
<div class="t" style="left:139.40px;top:558.67px;font-size:11.5px;line-height:11.5px;color:#505050;transform:scaleX(0.9427);transform-origin:0 0;">Accessibility: Investigate</div>
<svg style="position:absolute;left:621px;top:554px;" width="20" height="19" viewBox="0 0 20 19"><path d="M7.5 4.8L10.6 2.2L13.7 4.8" fill="none" stroke="#555" stroke-width="1.1"/><path d="M2 9.5H18.6M2 13.8H18.6M2 18H18.6" stroke="#555" stroke-width="1.1"/></svg>
<div class="t" style="left:639.96px;top:558.67px;font-size:11.5px;line-height:11.5px;color:#505050;transform:scaleX(1.0414);transform-origin:0 0;">Notes</div>
<svg style="position:absolute;left:688px;top:555px;" width="19" height="18" viewBox="0 0 19 18"><path d="M5.5 10.8H2.3V3.3H16.3V8.5" fill="none" stroke="#555" stroke-width="1.2"/><circle cx="11.8" cy="11.6" r="2.6" fill="none" stroke="#444" stroke-width="1.6"/><path d="M11.8 7.3V8.6M11.8 14.6V15.9M7.5 11.6H8.8M14.8 11.6H16.1M8.8 8.6L9.7 9.5M13.9 13.7L14.8 14.6M8.8 14.6L9.7 13.7M13.9 9.5L14.8 8.6" stroke="#444" stroke-width="1.4"/></svg>
<div class="t" style="left:706.64px;top:558.67px;font-size:11.5px;line-height:11.5px;color:#505050;transform:scaleX(0.9605);transform-origin:0 0;">Display Settings</div>
<div style="position:absolute;left:808px;top:563px;width:9px;height:1.2px;background:#555"></div>
<div style="position:absolute;left:822px;top:564px;width:106px;height:1px;background:#777"></div>
<div style="position:absolute;left:874.5px;top:561px;width:1px;height:6px;background:#777"></div>
<div style="position:absolute;left:843px;top:558px;width:5px;height:12px;background:#333"></div>
<div style="position:absolute;left:933.5px;top:563px;width:8.5px;height:1.2px;background:#555"></div>
<div style="position:absolute;left:937.2px;top:559.5px;width:1.2px;height:8.5px;background:#555"></div>
<div class="t" style="left:955.80px;top:558.67px;font-size:11.5px;line-height:11.5px;color:#505050;transform:scaleX(0.8783);transform-origin:0 0;">47%</div>
<svg style="position:absolute;left:989px;top:554px;" width="18" height="18" viewBox="0 0 18 18"><rect x="6" y="6" width="6.5" height="7" fill="none" stroke="#555" stroke-width="1.2"/><path d="M2.8 6.8L1 9.5L2.8 12.2M15.7 6.8L17.5 9.5L15.7 12.2M6.5 3.3L9.2 1.5L12 3.3M6.5 15.7L9.2 17.5L12 15.7" fill="none" stroke="#555" stroke-width="1.1"/></svg>
<div style="position:absolute;left:8px;top:95px;width:173px;height:159.6px;background:#fff;border:3px solid #ff5141;box-sizing:border-box"></div>
<div style="position:absolute;left:11px;top:98px;width:167px;height:1px;background:#e4e4e4"></div>
<div class="t" style="left:49.70px;top:109.00px;font-size:13px;line-height:13px;color:#262626;-webkit-text-stroke:0.2px #262626;transform:scaleX(0.9863);transform-origin:0 0;"><u>A</u>dd Shape After</div>
<div class="t" style="left:49.70px;top:139.40px;font-size:13px;line-height:13px;color:#262626;-webkit-text-stroke:0.2px #262626;transform:scaleX(0.9726);transform-origin:0 0;">Add Shape <u>B</u>efore</div>
<div class="t" style="left:49.70px;top:170.00px;font-size:13px;line-height:13px;color:#262626;-webkit-text-stroke:0.2px #262626;transform:scaleX(0.9827);transform-origin:0 0;">Add Shape Abo<u>v</u>e</div>
<div class="t" style="left:49.70px;top:200.30px;font-size:13px;line-height:13px;color:#262626;-webkit-text-stroke:0.2px #262626;transform:scaleX(0.9738);transform-origin:0 0;">Add Shape Belo<u>w</u></div>
<div class="t" style="left:49.70px;top:230.90px;font-size:13px;line-height:13px;color:#262626;-webkit-text-stroke:0.2px #262626;transform:scaleX(0.9658);transform-origin:0 0;">Add Assis<u>t</u>ant</div>
<svg style="position:absolute;left:22px;top:104px;" width="20" height="19" viewBox="0 0 20 19"><path d="M1.5 11V1.5H11.5V5" fill="none" stroke="#555" stroke-width="1.3"/><rect x="5.5" y="5.5" width="12.5" height="12.5" fill="#8cbdec" stroke="#1f6fc5" stroke-width="1.5"/></svg>
<svg style="position:absolute;left:22px;top:135px;" width="20" height="19" viewBox="0 0 20 19"><rect x="1.5" y="1.5" width="12" height="11.5" fill="#8cbdec" stroke="#1f6fc5" stroke-width="1.5"/><rect x="7.5" y="7.5" width="10.5" height="10" fill="#f7f7f7" stroke="#555" stroke-width="1.3"/></svg>
<svg style="position:absolute;left:22px;top:165px;" width="20" height="20" viewBox="0 0 20 20"><rect x="1.5" y="1.5" width="15.5" height="8.5" fill="#8cbdec" stroke="#1f6fc5" stroke-width="1.5"/><path d="M3.5 10V15H6" fill="none" stroke="#555" stroke-width="1.2"/><rect x="6" y="12" width="11.5" height="6.5" fill="#f7f7f7" stroke="#555" stroke-width="1.3"/></svg>
<svg style="position:absolute;left:22px;top:196px;" width="20" height="20" viewBox="0 0 20 20"><rect x="1.5" y="1.5" width="15.5" height="8.5" fill="#f7f7f7" stroke="#555" stroke-width="1.3"/><path d="M3.5 10V15H6" fill="none" stroke="#555" stroke-width="1.2"/><rect x="6" y="12" width="11.5" height="6" fill="#8cbdec" stroke="#1f6fc5" stroke-width="1.5"/></svg>
<svg style="position:absolute;left:22px;top:226px;" width="20" height="20" viewBox="0 0 20 20"><rect x="1.5" y="1.5" width="15.5" height="8.5" fill="#f7f7f7" stroke="#555" stroke-width="1.3"/><path d="M3.5 10V18M3.5 15H6" fill="none" stroke="#555" stroke-width="1.2"/><rect x="6" y="12" width="11.5" height="6" fill="#8cbdec" stroke="#1f6fc5" stroke-width="1.5"/></svg>
</body></html>
